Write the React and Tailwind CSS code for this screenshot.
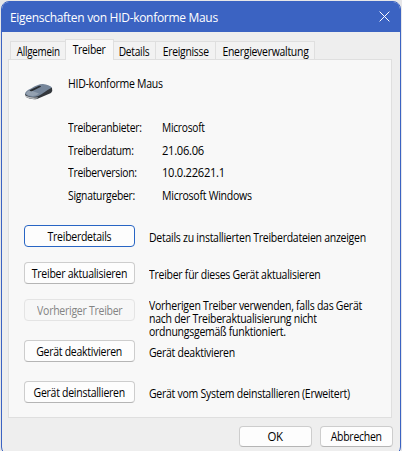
import React from "react";

const TABS = [
  { label: "Allgemein", width: "w-[56px]", scale: "scale-x-[0.82]" },
  { label: "Treiber", width: "w-[49px]", scale: "scale-x-[0.86]", active: true },
  { label: "Details", width: "w-[42px]", scale: "scale-x-[0.85]" },
  { label: "Ereignisse", width: "w-[60px]", scale: "scale-x-[0.86]" },
  { label: "Energieverwaltung", width: "w-[99px]", scale: "scale-x-[0.87]" },
];

const INFO = [
  { label: "Treiberanbieter:", value: "Microsoft", height: "h-[23px]", scale: "scale-x-[0.85]" },
  { label: "Treiberdatum:", value: "21.06.06", height: "h-[22px]", scale: "scale-x-[0.93]" },
  { label: "Treiberversion:", value: "10.0.22621.1", height: "h-[23px]", scale: "scale-x-[0.93]" },
  { label: "Signaturgeber:", value: "Microsoft Windows", height: "h-[23px]", scale: "scale-x-[0.88]" },
];

const ACTIONS = [
  { label: "Treiberdetails", text: ["Details zu installierten Treiberdateien anzeigen"], height: "h-[37px]", variant: "focus" },
  { label: "Treiber aktualisieren", text: ["Treiber für dieses Gerät aktualisieren"], height: "h-[37px]" },
  {
    label: "Vorheriger Treiber",
    text: ["Vorherigen Treiber verwenden, falls das Gerät", "nach der Treiberaktualisierung nicht", "ordnungsgemäß funktioniert."],
    height: "h-[41px]",
    variant: "disabled",
  },
  { label: "Gerät deaktivieren", text: ["Gerät deaktivieren"], height: "h-[41px]" },
  { label: "Gerät deinstallieren", text: ["Gerät vom System deinstallieren (Erweitert)"], height: "h-[22px]" },
];

const VARIANTS = {
  default: "bg-[#fdfdfd] border-[#cdcdcd] border-b-[#b5b5b5]",
  focus: "bg-[#fdfdfd] border-[#2865c4]",
  disabled: "bg-[#f7f7f7] border-[#e4e4e4] text-[#838383]",
};

// Dialog text is set slightly narrower than the font's normal width
function Label({ children, scale = "scale-x-[0.875]", origin = "origin-left" }) {
  return <span className={`block w-fit whitespace-nowrap ${origin} ${scale}`}>{children}</span>;
}

function Button({ children, size, scale, variant = "default" }) {
  return (
    <button
      disabled={variant === "disabled"}
      className={`flex shrink-0 items-center justify-center rounded-[4px] border ${size} ${VARIANTS[variant]}`}
    >
      <Label origin="origin-center" scale={scale}>{children}</Label>
    </button>
  );
}

function MouseIcon() {
  return (
    <svg width="30" height="18" viewBox="0 0 30 18" className="shrink-0">
      <path d="M1 11 L2 14 Q7 17 13 16 L27 10 Q29 8 28 5 L25 3 L5 9Z" fill="#33373c" />
      <path d="M2 14 Q7 17 13 15.6 L14 14.2 Q7 15 2 12.8Z" fill="#b9bdc1" />
      <path d="M1 10.5 Q2 7.5 7 5.5 Q14 .8 19 1 Q25 1.5 28 4.5 Q25 6 20 9.5 Q14 14 9 14 Q3 13.8 1 10.5Z" fill="#76869a" />
      <path d="M2 10.5 Q3 8 7 6.5 L9.5 8.4 L15 10.5 Q12 13 8.5 13 Q4 13 2 10.5Z" fill="#94a1b0" />
      <path d="M5.5 7.2 L15 2.7 Q17 2.4 17 3.7 L8.5 8 Q5.8 8.6 5.5 7.2Z" fill="#292d32" />
    </svg>
  );
}

export default function App() {
  return (
    <div className="h-[451px] w-[402px] overflow-hidden bg-[#e6e6e8] pt-px pl-px font-['Open_Sans',sans-serif] text-[12px] leading-[13px] tracking-[-0.3px] text-black">
      <div className="h-[454px] w-[400px] overflow-hidden rounded-[8px] border border-[#3b63c2] bg-[#eeeeee]">
        {/* Title bar */}
        <div className="flex h-[30px] items-center justify-between bg-[#3b63c2] pr-[10px] pl-[8px] text-white">
          <span>Eigenschaften von HID-konforme Maus</span>
          <svg width="11" height="11" viewBox="0 0 11 11" fill="none" stroke="white" className="mb-[2px]">
            <path d="M.6 .6 L10.4 10.4 M10.4 .6 L.6 10.4" />
          </svg>
        </div>

        {/* Tabs */}
        <div className="flex h-[27px] items-end pl-[8px]">
          {TABS.map((tab) => (
            <div
              key={tab.label}
              className={`flex shrink-0 justify-center border-t border-r border-[#dfdfdf] first:border-l ${tab.width} ${
                tab.active ? "relative -mb-px h-[21px] border-l -ml-px bg-[#f8f8f8] pt-[3px]" : "h-[18px] bg-[#f2f2f2] pt-[3px]"
              }`}
            >
              <Label origin="origin-center" scale={tab.scale}>{tab.label}</Label>
            </div>
          ))}
        </div>

        {/* Driver page */}
        <div className="ml-[6px] h-[359px] w-[384px] border border-[#dfdfdf] bg-[#f8f8f8] pl-[15px]">
          <div className="flex h-[61px] items-start pt-[17px]">
            <div className="w-[44px] pt-[6px]">
              <MouseIcon />
            </div>
            <Label>HID-konforme Maus</Label>
          </div>

          <div className="h-[104px] pl-[44px]">
            {INFO.map((row) => (
              <div key={row.label} className={`flex ${row.height}`}>
                <div className="w-[94px]">
                  <Label scale="scale-x-[0.86]">{row.label}</Label>
                </div>
                <Label scale={row.scale}>{row.value}</Label>
              </div>
            ))}
          </div>

          {ACTIONS.map((action) => (
            <div key={action.label} className={`flex ${action.height}`}>
              <Button size="h-[22px] w-[111px]" variant={action.variant}>
                {action.label}
              </Button>
              <div className={`ml-[14px] ${action.text.length > 1 ? "" : "pt-[6px]"}`}>
                {action.text.map((line) => (
                  <Label key={line}>{line}</Label>
                ))}
              </div>
            </div>
          ))}
        </div>

        {/* Dialog buttons */}
        <div className="flex justify-end gap-[8px] pt-[8px] pr-[7px]">
          <Button size="h-[21px] w-[73px]" scale="scale-x-[0.95]">OK</Button>
          <Button size="h-[21px] w-[73px]">Abbrechen</Button>
        </div>
      </div>
    </div>
  );
}
